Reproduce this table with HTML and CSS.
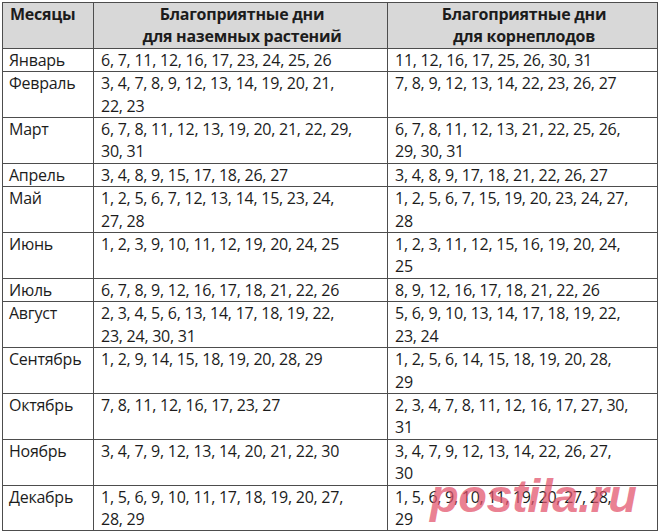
FILE: index.html
```html
<!DOCTYPE html>
<html lang="ru">
<head>
<meta charset="utf-8">
<title>Благоприятные дни</title>
<link rel="stylesheet" href="styles.css">
</head>
<body>
<div class="wrap">
<table class="cal">
<colgroup><col class="c-month"><col class="c-ground"><col class="c-root"></colgroup>
<thead>
<tr><th class="h-month">Месяцы</th><th>Благоприятные дни<br>для наземных растений</th><th>Благоприятные дни<br>для корнеплодов</th></tr>
</thead>
<tbody>
<tr><td>Январь</td><td>6, 7, 11, 12, 16, 17, 23, 24, 25, 26</td><td>11, 12, 16, 17, 25, 26, 30, 31</td></tr>
<tr><td>Февраль</td><td>3, 4, 7, 8, 9, 12, 13, 14, 19, 20, 21,<br>22, 23</td><td>7, 8, 9, 12, 13, 14, 22, 23, 26, 27</td></tr>
<tr><td>Март</td><td>6, 7, 8, 11, 12, 13, 19, 20, 21, 22, 29,<br>30, 31</td><td>6, 7, 8, 11, 12, 13, 21, 22, 25, 26,<br>29, 30, 31</td></tr>
<tr><td>Апрель</td><td>3, 4, 8, 9, 15, 17, 18, 26, 27</td><td>3, 4, 8, 9, 17, 18, 21, 22, 26, 27</td></tr>
<tr><td>Май</td><td>1, 2, 5, 6, 7, 12, 13, 14, 15, 23, 24,<br>27, 28</td><td>1, 2, 5, 6, 7, 15, 19, 20, 23, 24, 27,<br>28</td></tr>
<tr><td>Июнь</td><td>1, 2, 3, 9, 10, 11, 12, 19, 20, 24, 25</td><td>1, 2, 3, 11, 12, 15, 16, 19, 20, 24,<br>25</td></tr>
<tr><td>Июль</td><td>6, 7, 8, 9, 12, 16, 17, 18, 21, 22, 26</td><td>8, 9, 12, 16, 17, 18, 21, 22, 26</td></tr>
<tr><td>Август</td><td>2, 3, 4, 5, 6, 13, 14, 17, 18, 19, 22,<br>23, 24, 30, 31</td><td>5, 6, 9, 10, 13, 14, 17, 18, 19, 22,<br>23, 24</td></tr>
<tr><td>Сентябрь</td><td>1, 2, 9, 14, 15, 18, 19, 20, 28, 29</td><td>1, 2, 5, 6, 14, 15, 18, 19, 20, 28,<br>29</td></tr>
<tr><td>Октябрь</td><td>7, 8, 11, 12, 16, 17, 23, 27</td><td>2, 3, 4, 7, 8, 11, 12, 16, 17, 27, 30,<br>31</td></tr>
<tr><td>Ноябрь</td><td>3, 4, 7, 9, 12, 13, 14, 20, 21, 22, 30</td><td>3, 4, 7, 9, 12, 13, 14, 22, 26, 27,<br>30</td></tr>
<tr><td>Декабрь</td><td>1, 5, 6, 9, 10, 11, 17, 18, 19, 20, 27,<br>28, 29</td><td>1, 5, 6, 9, 10, 11, 19, 20, 27, 28,<br>29</td></tr>
</tbody>
</table>
<div class="watermark">postila.ru</div>
</div>
</body>
</html>
```
FILE: styles.css
```css
html, body {
  margin: 0;
  padding: 0;
  background: #ffffff;
}
.wrap {
  position: relative;
  width: 660px;
  height: 532px;
  padding: 2px 0 0 2px;
  box-sizing: border-box;
}
.cal {
  border-collapse: collapse;
  table-layout: fixed;
  width: 655px;
  font-family: "Open Sans", "Noto Sans", sans-serif;
  font-size: 16px;
  letter-spacing: -0.25px;
  line-height: 22.4px;
  color: #1c1c1c;
  border: 1px solid #6e6e6e;
}
.c-month { width: 91px; }
.c-ground { width: 294px; }
.c-root { width: 270px; }
.cal th,
.cal td {
  border: 1px solid #4d4d4d;
  padding: 0 4px 0 7px;
  vertical-align: top;
  text-align: left;
  white-space: nowrap;
}
.cal td:first-child {
  padding-left: 6px;
}
.cal thead th {
  background: #d8d8d8;
  font-weight: 700;
  text-align: center;
  height: 43px;
  padding-top: 0;
}
.cal thead th.h-month {
  text-align: left;
  padding-left: 7px;
}
.watermark {
  position: absolute;
  left: 430px;
  top: 472px;
  font-family: "Liberation Sans", Arial, sans-serif;
  font-weight: 700;
  font-style: italic;
  font-size: 47px;
  line-height: 1;
  letter-spacing: -0.5px;
  color: rgba(226, 80, 105, 0.72);
  pointer-events: none;
}
```
